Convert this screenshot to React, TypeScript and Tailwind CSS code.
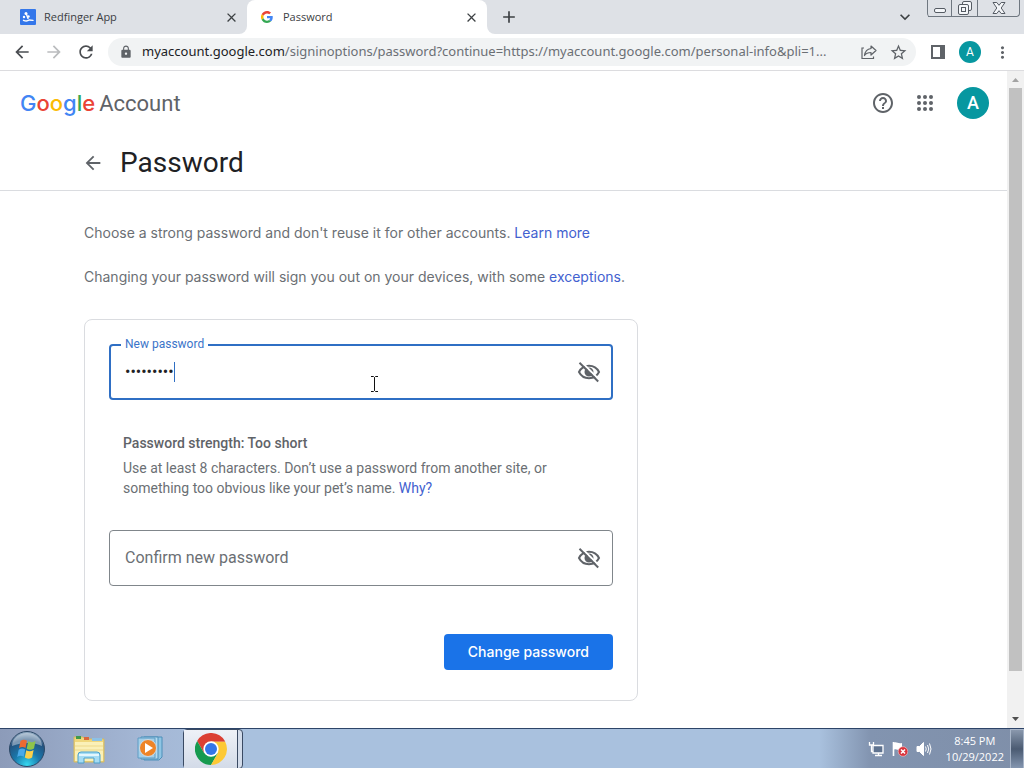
import { useState } from 'react';
import type { ReactNode } from 'react';
import {
  MdAdd,
  MdArrowBack,
  MdArrowForward,
  MdClose,
  MdHelpOutline,
  MdKeyboardArrowDown,
  MdLock,
  MdMoreVert,
  MdRefresh,
  MdStarOutline,
} from 'react-icons/md';

function GoogleG() {
  return (
    <svg viewBox="0 0 48 48" className="size-3 shrink-0">
      <path fill="#EA4335" d="M24 9.5c3.500 0 6.700 1.200 9.200 3.600l6.900-6.900C35.900 2.400 30.500 0 24 0 14.600 0 6.500 5.400 2.600 13.200l8 6.200C12.400 13.700 17.700 9.500 24 9.500z" />
      <path fill="#4285F4" d="M47 24.500c0-1.600-.2-3.100-.4-4.500H24v9h12.900c-.6 3-2.300 5.500-4.800 7.200l7.700 6C44.400 38 47 31.800 47 24.500z" />
      <path fill="#FBBC05" d="M10.500 28.600a14.500 14.500 0 0 1 0-9.200l-8-6.200a24 24 0 0 0 0 21.600l8-6.200z" />
      <path fill="#34A853" d="M24 48c6.500 0 11.900-2.100 15.900-5.800l-7.700-6c-2.200 1.500-4.900 2.300-8.200 2.300-6.300 0-11.600-4.200-13.500-9.900l-8 6.200C6.500 42.600 14.600 48 24 48z" />
    </svg>
  );
}

function RedfingerIcon() {
  return (
    <svg viewBox="0 0 16 16" className="size-4 shrink-0">
      <rect width="16" height="16" rx="1" fill="#3477ea" />
      <circle cx="6" cy="4.500" r="1.500" fill="#fff" />
      <circle cx="4" cy="8" r="1.200" fill="#fff" />
      <circle cx="8.500" cy="7.500" r="1.200" fill="#fff" />
      <path d="M3.500 11.300c2 .9 4.200.8 5.800-.3l3.700.4M6.500 5.500l1.500 4" stroke="#fff" strokeWidth="1.400" strokeLinecap="round" fill="none" />
    </svg>
  );
}

function WindowControls() {
  const cell = 'flex items-center justify-center border-b border-r border-[#6f7780]';
  return (
    <div className="flex h-[17px] self-start rounded-b border-l border-[#6f7780]">
      <button aria-label="Minimize" className={`${cell} w-6`}>
        <svg viewBox="0 0 14 12" className="h-3 w-3.5">
          <rect x="1.500" y="6.500" width="11" height="4" rx="1.500" fill="#f4f6f9" stroke="#555b63" />
        </svg>
      </button>
      <button aria-label="Restore" className={`${cell} w-[26px]`}>
        <svg viewBox="0 0 14 14" className="size-3.5" fill="#f4f6f9" stroke="#555b63">
          <rect x="4.500" y=".5" width="9" height="9" rx="1.500" />
          <rect x=".5" y="3.500" width="10" height="10" rx="1.500" />
          <rect x="3.500" y="6.500" width="4" height="4" />
        </svg>
      </button>
      <button aria-label="Close" className={`${cell} w-[42px] rounded-br`}>
        <svg viewBox="0 0 14 12" className="h-3 w-3.5">
          <path d="M1 .5h3.800L7 3.300 9.200.5H13L9.200 6l3.800 5.500H9.200L7 8.700l-2.200 2.800H1L4.800 6z" fill="#f4f6f9" stroke="#555b63" />
        </svg>
      </button>
    </div>
  );
}

function TabStrip() {
  return (
    <div className="flex h-[34px] text-[11px] text-[#3c4043]" role="tablist">
      <div role="tab" aria-selected="false" className="flex w-[247px] items-center gap-2 rounded-br-lg bg-[#dee1e6] pl-5 pr-2">
        <RedfingerIcon />
        <span className="grow">Redfinger App</span>
        <button aria-label="Close Redfinger App tab">
          <MdClose size={15} />
        </button>
      </div>
      <div className="w-[240px] bg-[#dee1e6]">
        <div role="tab" aria-selected="true" className="flex h-full items-center gap-2.5 rounded-t-lg bg-white pl-3.5 pr-2">
          <GoogleG />
          <span className="grow">Password</span>
          <button aria-label="Close Password tab">
            <MdClose size={15} />
          </button>
        </div>
      </div>
      <div className="flex grow items-center rounded-bl-lg bg-[#dee1e6] pr-1">
        <button aria-label="New tab" className="ml-3">
          <MdAdd size={20} />
        </button>
        <button aria-label="Search tabs" className="ml-auto mr-3">
          <MdKeyboardArrowDown size={20} />
        </button>
        <WindowControls />
      </div>
    </div>
  );
}

function Toolbar() {
  return (
    <div className="flex h-[37px] items-center border-b border-[#dcdcdf] bg-white px-3 text-[#5f6368]">
      <button aria-label="Back">
        <MdArrowBack size={20} className="text-[#4a4d51]" />
      </button>
      <button aria-label="Forward" className="ml-3">
        <MdArrowForward size={20} className="text-[#babcbe]" />
      </button>
      <button aria-label="Reload" className="ml-3">
        <MdRefresh size={20} className="text-[#4a4d51]" />
      </button>
      <div className="ml-3 flex h-7 min-w-0 grow items-center rounded-full bg-[#f1f3f4] pl-[11px] pr-2">
        <MdLock size={14} className="shrink-0" />
        <div className="ml-[9px] grow whitespace-nowrap font-['Noto_Sans',sans-serif] text-[13px] text-[#6b6f74]">
          <span className="text-[#202124]">myaccount.google.com</span>
          /signinoptions/password?continue=https://myaccount.google.com/personal-info&amp;pli=1...
        </div>
        <button aria-label="Share" className="mr-3">
          <svg viewBox="0 0 16 16" className="size-4" fill="none" stroke="currentColor" strokeWidth="1.200">
            <path d="M3 4H1v10.500h11.500V12.500" />
            <path d="M10 2l5 4.500L10 11V8.500c-3 0-5 .8-6.500 3C4 7.500 6.500 5 10 4.500z" strokeLinejoin="round" />
          </svg>
        </button>
        <button aria-label="Bookmark this tab">
          <MdStarOutline size={19} />
        </button>
      </div>
      <button aria-label="Side panel" className="ml-[15px]">
        <svg viewBox="0 0 14 14" className="size-3.5">
          <path fill="currentColor" d="M0 0h14v14H0zM2 2v10h7V2z" fillRule="evenodd" />
        </svg>
      </button>
      <button aria-label="Profile" className="ml-3.5 flex size-[22px] items-center justify-center rounded-full bg-[#0797a0] font-[Roboto] text-xs text-white">
        A
      </button>
      <button aria-label="Menu" className="ml-3">
        <MdMoreVert size={19} />
      </button>
    </div>
  );
}

function AccountHeader() {
  return (
    <header className="flex h-16 items-center justify-between pl-5 pr-[18px]">
      <a href="#" className="flex items-baseline gap-1 text-[22px] text-[#5f6368]">
        <span className="font-medium">
          <span className="text-[#4285f4]">G</span>
          <span className="text-[#ea4335]">o</span>
          <span className="text-[#fbbc05]">o</span>
          <span className="text-[#4285f4]">g</span>
          <span className="text-[#34a853]">l</span>
          <span className="text-[#ea4335]">e</span>
        </span>
        <span className="font-[Roboto]">Account</span>
      </a>
      <div className="flex items-center gap-[18px] text-[#5f6368]">
        <button aria-label="Help">
          <MdHelpOutline size={24} />
        </button>
        <button aria-label="Google apps">
          <svg viewBox="0 0 24 24" className="size-6" fill="currentColor">
            {[6, 12, 18].map((y) => [6, 12, 18].map((x) => <circle key={`${x}-${y}`} cx={x} cy={y} r="2" />))}
          </svg>
        </button>
        <button aria-label="Google Account" className="ml-0.5 flex size-8 items-center justify-center rounded-full bg-[#0797a0] font-[Roboto] text-lg font-medium text-white">
          A
        </button>
      </div>
    </header>
  );
}

function EyeOffIcon() {
  return (
    <svg viewBox="0 0 24 24" className="size-6" fill="none" stroke="currentColor">
      <path d="M2 12C4 8 7.500 5.800 12 5.800S20 8 22 12c-2 4-5.500 6.200-10 6.200S4 16 2 12z" strokeWidth="2" />
      <circle cx="12" cy="12" r="3.500" strokeWidth="2" />
      <path d="M9 10l5 5h-3l-2-2z" fill="currentColor" />
      <path d="M4 1.500l18.500 18.500" stroke="#fff" strokeWidth="2" />
      <path d="M2.500 2.800l18.700 18.700" strokeWidth="2" />
    </svg>
  );
}

interface PasswordFieldProps {
  id: string;
  label: string;
  initial: string;
  focused?: boolean;
}

function PasswordField({ id, label, initial, focused }: PasswordFieldProps) {
  const [value, setValue] = useState(initial);
  const [visible, setVisible] = useState(false);

  return (
    <div
      className={`relative flex h-14 items-center rounded font-[Roboto] ${
        focused ? 'border-2 border-[#2f6fc4] pl-3.5 pr-2.5' : 'border border-[#80868b] pl-[15px] pr-[11px]'
      }`}
    >
      <label
        htmlFor={id}
        className={
          focused
            ? 'absolute -top-2.5 left-2.5 bg-white px-1 text-xs text-[#3b74c9]'
            : 'absolute left-[15px] text-base text-[#6b6f74]'
        }
      >
        {label}
      </label>
      <input
        id={id}
        type={visible ? 'text' : 'password'}
        value={value}
        onChange={(e) => setValue(e.target.value)}
        className="min-w-0 grow bg-transparent text-base text-[#202124] outline-none"
      />
      {focused && <span className="absolute left-[63px] top-4 h-5 w-px bg-[#2f6fc4]" />}
      <button type="button" aria-label="Show password" onClick={() => setVisible((v) => !v)} className="text-[#5f6368]">
        <EyeOffIcon />
      </button>
    </div>
  );
}

function TextCursor() {
  return (
    <svg viewBox="0 0 9 16" className="absolute left-[285px] top-14 h-4 w-[9px]" fill="none" stroke="#111">
      <path d="M1 .5h2.500l1 1 1-1H8M4.500 1.500v13M1 15.500h2.500l1-1 1 1H8" />
    </svg>
  );
}

function PasswordForm() {
  return (
    <form
      className="relative mt-8 max-w-[554px] rounded-lg border border-[#dadce0] px-6 pb-[30px] pt-6"
      onSubmit={(e) => e.preventDefault()}
    >
      <PasswordField id="new-password" label="New password" initial="secret123" focused />
      <div className="my-8 px-3.5 font-[Roboto] text-sm leading-5 text-[#6b6f74]">
        <p className="mb-1 font-medium leading-[22px] text-[#5f6368]">Password strength: Too short</p>
        <p>
          Use at least 8 characters. Don’t use a password from another site, or something too obvious like your pet’s name.{' '}
          <a href="#" className="text-[#4261cf]">Why?</a>
        </p>
      </div>
      <PasswordField id="confirm-password" label="Confirm new password" initial="" />
      <div className="mt-12 flex justify-end">
        <button type="submit" className="h-9 rounded bg-[#1a73e8] px-6 text-sm font-medium text-white">
          Change password
        </button>
      </div>
      <TextCursor />
    </form>
  );
}

function ScrollBar() {
  return (
    <div className="flex w-[17px] shrink-0 flex-col items-center bg-[#f1f1f1]">
      <svg viewBox="0 0 17 17" className="size-[17px]">
        <path d="M5 11l3.500-4 3.500 4z" fill="#a3a3a3" />
      </svg>
      <div className="w-[13px] grow bg-[#c1c1c1]" />
      <div className="h-10" />
      <svg viewBox="0 0 17 17" className="size-[17px]">
        <path d="M5 6l3.500 4L12 6z" fill="#505050" />
      </svg>
    </div>
  );
}

function StartOrb() {
  return (
    <svg viewBox="0 0 38 38" className="size-[38px]">
      <defs>
        <radialGradient id="orb" cx="50%" cy="95%" r="95%">
          <stop offset="0" stopColor="#35d8f0" />
          <stop offset=".4" stopColor="#1a78ab" />
          <stop offset=".75" stopColor="#24527f" />
          <stop offset="1" stopColor="#9fb6cc" />
        </radialGradient>
      </defs>
      <circle cx="19" cy="19" r="17.500" fill="url(#orb)" stroke="#2c4866" />
      <path d="M4 16a15 13 0 0 1 30 0c-8-4-20-4-30 0z" fill="#fff" opacity=".4" />
      <path d="M12.500 11c2.300-1.700 4.300-1.700 6.500-.3l-1.500 7.300c-2.300-1.500-4.300-1.300-6.500.3z" fill="#ec6a32" />
      <path d="M20.200 11.300c2.500 1.500 4.500 1.300 7.300-.3l-1.500 7.500c-2.500 1.500-5 1.700-7.300.2z" fill="#8fc44a" />
      <path d="M10.700 19.800c2.300-1.700 4.300-1.700 6.500-.3l-1.500 7.300c-2.300-1.500-4.300-1.300-6.500.3z" fill="#4aa9e8" />
      <path d="M18.300 20.200c2.500 1.500 4.500 1.300 7.300-.3l-1.500 7.500c-2.500 1.500-5 1.700-7.300.2z" fill="#fbd04a" />
    </svg>
  );
}

function ExplorerIcon() {
  return (
    <svg viewBox="0 0 34 30" className="h-[30px] w-[34px]">
      <path d="M2 3h9l2 2h19v23H2z" fill="#f0d77c" stroke="#d3b962" />
      <path d="M4 2h5v3H4z" fill="#3f9a4c" />
      <path d="M12 3h5v3h-5z" fill="#d9673d" />
      <path d="M20 4h10v3H20z" fill="#8cc1e6" />
      <path d="M3 8h28v19H3z" fill="#faf0b8" />
      <path d="M3 12h28M3 16h28" stroke="#ecd88a" />
      <path d="M6 29v-8q0-3 3-3h16q3 0 3 3v8h-6v-5H12v5z" fill="#a5dcf3" stroke="#4a9fcb" />
      <path d="M7 21h20" stroke="#e3f6fd" strokeWidth="2" />
    </svg>
  );
}

function MediaPlayerIcon() {
  return (
    <svg viewBox="0 0 30 28" className="h-7 w-[30px]">
      <path d="M8 2h18v20l-3 3H8z" fill="#8fc5e4" stroke="#4d8fb9" />
      <path d="M5 2h17v22H5z" fill="#b5dcf1" stroke="#4d8fb9" />
      <path d="M2 3h17v20H2z" fill="#a2cfe9" stroke="#5f9cc4" />
      <circle cx="12" cy="13" r="8.500" fill="#ee8427" stroke="#c9dcea" />
      <path d="M9 8l8 5-8 5z" fill="#fff" />
    </svg>
  );
}

function ChromeIcon() {
  return (
    <svg viewBox="0 0 48 48" className="size-8">
      <path fill="#db3f33" d="M3.200 12A24 24 0 0 1 44.800 12l.5 1H24L13.600 30z" />
      <path fill="#169a4f" d="M3.200 12l10.400 18L24 35l10.400-5L24 48A24 24 0 0 1 3.200 12z" />
      <path fill="#fdc935" d="M24 13h21.300A24 24 0 0 1 24 48l10.400-18z" />
      <circle cx="24" cy="24" r="11.500" fill="#fff" />
      <circle cx="24" cy="24" r="9" fill="#3476e8" />
    </svg>
  );
}

function TaskButton({ label, children }: { label: string; children: ReactNode }) {
  return (
    <button aria-label={label} className="flex h-10 w-[62px] items-center justify-center">
      {children}
    </button>
  );
}

function TrayIcons() {
  return (
    <div className="flex items-center gap-2">
      <svg viewBox="0 0 16 16" className="size-4">
        <path d="M5 4.500h10v7.500H5zM7 14.500h7M10.500 12v2" fill="#5f7390" stroke="#fff" strokeWidth="1.300" />
        <path d="M1.500 1v3h4V1M3.500 4v6.500H5" fill="none" stroke="#fff" strokeWidth="1.300" />
      </svg>
      <svg viewBox="0 0 16 16" className="size-4">
        <path d="M1.500 1v14" stroke="#fff" strokeWidth="1.600" />
        <path d="M2 1.500c3-1 4 1.500 8 .5v7c-4 1-5-1.500-8-.5z" fill="#fff" />
        <circle cx="11" cy="10.500" r="4.800" fill="#d9343d" stroke="#f6c9cb" strokeWidth=".6" />
        <path d="M9 8.500l4 4M13 8.500l-4 4" stroke="#fff" strokeWidth="1.500" />
      </svg>
      <svg viewBox="0 0 16 16" className="size-4" fill="none" stroke="#fff">
        <path d="M1 5.500h2.500l4-4v13l-4-4H1z" fill="#fff" />
        <path d="M9.500 5.500q1.500 2.500 0 5M11.500 4q2.500 4 0 8M13.500 2.500q3 5.500 0 11" />
      </svg>
    </div>
  );
}

function Taskbar() {
  return (
    <footer className="flex h-10 shrink-0 items-center border-t border-[#2d4468] bg-linear-[90deg,#8c9bb9_0%,#a4b7d5_14%,#a9c1de_24%,#a9c1de_80%,#8294b0_85%,#7f8fa9_100%]">
      <button aria-label="Start" className="ml-2 mr-3">
        <StartOrb />
      </button>
      <TaskButton label="Windows Explorer">
        <ExplorerIcon />
      </TaskButton>
      <TaskButton label="Windows Media Player">
        <MediaPlayerIcon />
      </TaskButton>
      <button
        aria-label="Google Chrome"
        className="ml-px flex h-10 rounded-sm border border-[#3a4a63] bg-[#d3dcea] pr-1"
      >
        <span className="flex h-full w-[54px] items-center justify-center border-r border-[#3a4a63] bg-linear-to-b from-[#eef1f7] to-[#d3dbe8]">
          <ChromeIcon />
        </span>
      </button>
      <div className="ml-auto flex items-center gap-3.5">
        <TrayIcons />
        <div className="text-center text-[11px] leading-4 text-white">
          <div>8:45 PM</div>
          <div>10/29/2022</div>
        </div>
      </div>
      <button aria-label="Show desktop" className="ml-1.5 h-10 w-3.5 border border-[#a9b6c9] bg-linear-to-b from-[#8a98ad] via-[#4b5b72] to-[#8496b0]" />
    </footer>
  );
}

export default function App() {
  return (
    <div className="flex h-screen flex-col overflow-hidden bg-white font-['Open_Sans',sans-serif]">
      <TabStrip />
      <Toolbar />
      <div className="flex min-h-0 grow font-[Inter,sans-serif]">
        <main className="min-w-0 grow overflow-hidden">
          <AccountHeader />
          <div className="flex h-14 items-center gap-4 border-b border-[#dadce0] pl-[82px]">
            <button aria-label="Back to account">
              <MdArrowBack size={22} className="text-[#5f6368]" />
            </button>
            <h1 className="font-[Roboto] text-[28px] text-[#202124]">Password</h1>
          </div>
          <div className="px-[84px] pt-8 text-sm leading-5 text-[#6b6f74]">
            <p className="mb-6">
              Choose a strong password and don't reuse it for other accounts.{' '}
              <a href="#" className="text-[#4261cf]">Learn more</a>
            </p>
            <p>
              Changing your password will sign you out on your devices, with some{' '}
              <a href="#" className="text-[#4261cf]">exceptions</a>.
            </p>
            <PasswordForm />
          </div>
        </main>
        <ScrollBar />
      </div>
      <Taskbar />
    </div>
  );
}
